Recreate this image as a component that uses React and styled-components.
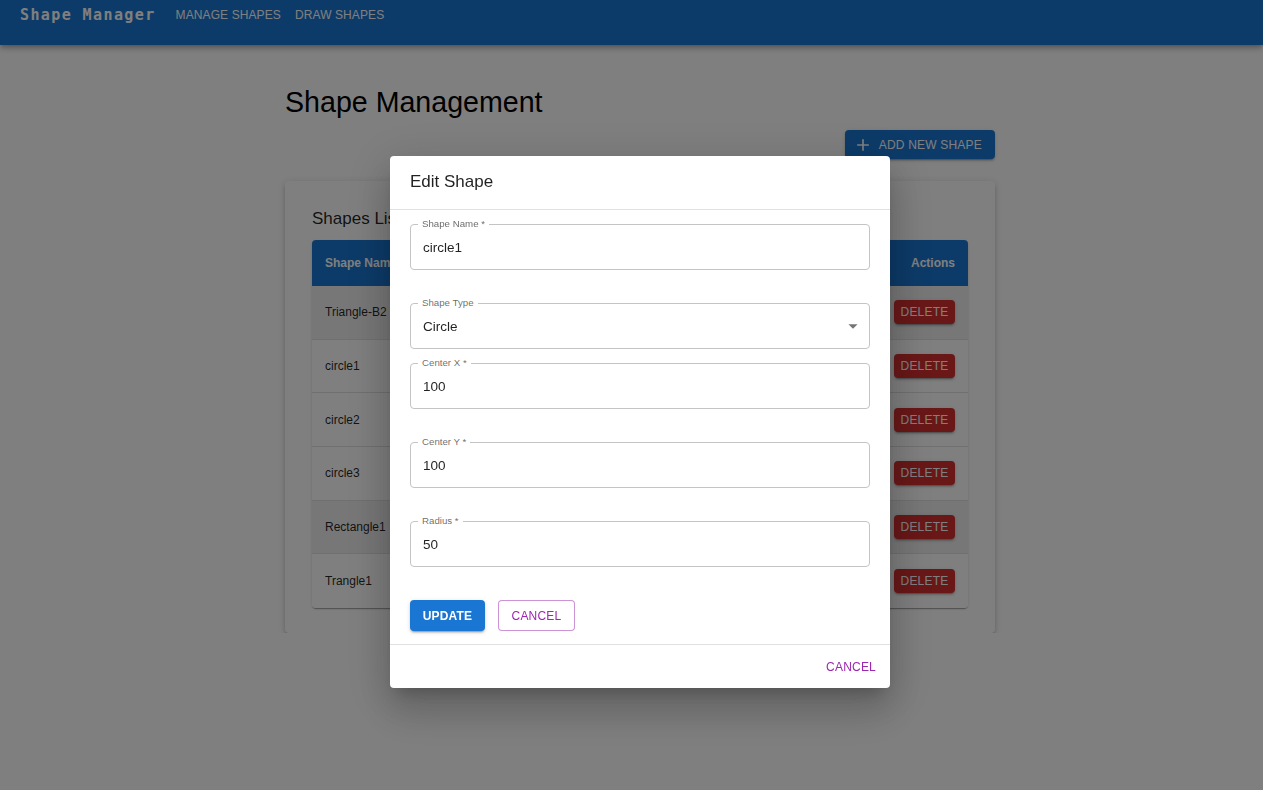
import React from "react";
import styled, { createGlobalStyle } from "styled-components";

const GlobalStyle = createGlobalStyle`
  html, body { margin: 0; padding: 0; background: #fff; }
  body {
    font-family: "Liberation Sans", Arial, sans-serif;
    color: rgba(0, 0, 0, 0.87);
  }
  * { box-sizing: border-box; }
`;

const AppBar = styled.header`
  height: 45px;
  background: #1976d2;
  color: #fff;
  display: flex;
  align-items: flex-start;
  gap: 20px;
  padding: 5px 20px 0;
  box-shadow: 0 2px 4px -1px rgba(0, 0, 0, 0.2), 0 4px 5px 0 rgba(0, 0, 0, 0.14),
    0 1px 10px 0 rgba(0, 0, 0, 0.12);
`;

const Brand = styled.div`
  font-family: "DejaVu Sans Mono", "Liberation Mono", monospace;
  font-weight: 700;
  font-size: 15px;
  letter-spacing: 1.4px;
  line-height: 21px;
`;

const Nav = styled.nav`
  display: flex;
  gap: 14px;
`;

const NavLink = styled.span`
  font-size: 12px;
  line-height: 21px;
  letter-spacing: 0.1px;
  text-transform: uppercase;
`;

const Main = styled.main`
  padding-left: 17px;
`;

const Container = styled.div`
  width: 710px;
  margin: 0 auto;
  padding-top: 40px;
`;

const Heading = styled.h1`
  margin: 0;
  font-size: 28.6px;
  font-weight: 400;
  line-height: 35px;
  color: #000;
`;

const Toolbar = styled.div`
  display: flex;
  justify-content: flex-end;
  margin-top: 10px;
`;

const ContainedButton = styled.button`
  display: inline-flex;
  align-items: center;
  justify-content: center;
  gap: 6px;
  height: ${(p) => p.$h || 29}px;
  min-width: ${(p) => p.$w || 0}px;
  padding: ${(p) => p.$pad || "0 14px"};
  border: none;
  border-radius: 4px;
  background: ${(p) => p.$bg || "#1976d2"};
  color: #fff;
  font-family: inherit;
  font-size: 12px;
  font-weight: ${(p) => p.$weight || 400};
  letter-spacing: 0.2px;
  text-transform: uppercase;
  box-shadow: 0 3px 1px -2px rgba(0, 0, 0, 0.2), 0 2px 2px 0 rgba(0, 0, 0, 0.14),
    0 1px 5px 0 rgba(0, 0, 0, 0.12);
`;

const Paper = styled.section`
  margin-top: 22px;
  padding: 27px 27px 25px;
  border-radius: 4px;
  background: #fff;
  box-shadow: 0 3px 3px -2px rgba(0, 0, 0, 0.2), 0 3px 4px 0 rgba(0, 0, 0, 0.14),
    0 1px 8px 0 rgba(0, 0, 0, 0.12);
`;

const PaperTitle = styled.h2`
  margin: 0 0 10px;
  font-size: 17px;
  font-weight: 400;
  line-height: 22px;
`;

const Table = styled.div`
  border-radius: 4px;
  overflow: hidden;
  box-shadow: 0 2px 1px -1px rgba(0, 0, 0, 0.2), 0 1px 1px 0 rgba(0, 0, 0, 0.14),
    0 1px 3px 0 rgba(0, 0, 0, 0.12);
`;

const Row = styled.div`
  display: grid;
  grid-template-columns: 1.1fr 1fr 1.3fr 100px;
  align-items: center;
  height: ${(p) => (p.$head ? "46px" : "53.67px")};
  background: ${(p) => (p.$head ? "#1976d2" : p.$shaded ? "#efefef" : "#fff")};
  color: ${(p) => (p.$head ? "#fff" : "rgba(0,0,0,0.87)")};
  font-weight: ${(p) => (p.$head ? 700 : 400)};
  font-size: 12px;
  border-bottom: ${(p) => (p.$last || p.$head ? "none" : "1px solid #e0e0e0")};
`;

const Cell = styled.div`
  padding: 0 13px;
  text-align: ${(p) => (p.$right ? "right" : "left")};
  white-space: nowrap;
`;

const DeleteButton = styled(ContainedButton)`
  height: 24px;
  width: 61px;
  padding: 0;
`;

const Backdrop = styled.div`
  position: fixed;
  inset: 0;
  background: rgba(0, 0, 0, 0.5);
  display: flex;
  justify-content: center;
  align-items: flex-start;
  padding: 156px 0 0 17px;
`;

const Dialog = styled.div`
  width: 500px;
  background: #fff;
  border-radius: 4px;
  box-shadow: 0 11px 15px -7px rgba(0, 0, 0, 0.2), 0 24px 38px 3px rgba(0, 0, 0, 0.14),
    0 9px 46px 8px rgba(0, 0, 0, 0.12);
`;

const DialogTitle = styled.div`
  height: 54px;
  padding: 0 20px;
  line-height: 51px;
  font-size: 17px;
  border-bottom: 1px solid #e0e0e0;
`;

const DialogContent = styled.div`
  display: flex;
  flex-direction: column;
  gap: 14px;
  padding: 14px 20px 13px;
  border-bottom: 1px solid #e0e0e0;
`;

const Field = styled.div`
  position: relative;
  height: 46px;
  display: flex;
  align-items: center;
  justify-content: space-between;
  padding: 0 5px 0 12px;
  margin-bottom: ${(p) => (p.$spaced ? 19 : 0)}px;
  border: 1px solid #c4c4c4;
  border-radius: 4px;
  font-size: 13.5px;
`;

const FieldLabel = styled.span`
  position: absolute;
  top: -7px;
  left: 7px;
  padding: 0 4px;
  background: #fff;
  font-size: 9.7px;
  line-height: 11px;
  color: rgba(0, 0, 0, 0.6);
`;

const ButtonRow = styled.div`
  display: flex;
  gap: 13px;
`;

const OutlinedButton = styled.button`
  height: 31px;
  width: 77px;
  border: 1px solid rgba(156, 39, 176, 0.5);
  border-radius: 4px;
  background: #fff;
  color: #9c27b0;
  font-family: inherit;
  font-size: 12px;
  letter-spacing: 0.2px;
`;

const DialogFooter = styled.div`
  height: 43px;
  display: flex;
  justify-content: flex-end;
  align-items: center;
  padding-right: 6px;
`;

const TextButton = styled.button`
  height: 30px;
  padding: 0 8px;
  border: none;
  background: none;
  color: #9c27b0;
  font-family: inherit;
  font-size: 12px;
  letter-spacing: 0.2px;
`;

const AddIcon = () => (
  <svg width="20" height="20" viewBox="0 0 24 24" fill="currentColor">
    <path d="M19 13h-6v6h-2v-6H5v-2h6V5h2v6h6v2z" />
  </svg>
);

const DropIcon = () => (
  <svg width="22" height="22" viewBox="0 0 24 24" fill="#757575">
    <path d="M7 10l5 5 5-5z" />
  </svg>
);

const shapes = [
  { name: "Triangle-B2", type: "Triangle", info: "(0,0) (50,100) (100,0)", shaded: true },
  { name: "circle1", type: "Circle", info: "Center (100,100) r 50" },
  { name: "circle2", type: "Circle", info: "Center (200,150) r 40" },
  { name: "circle3", type: "Circle", info: "Center (300,200) r 30" },
  { name: "Rectangle1", type: "Rectangle", info: "(10,10) 120 x 80", shaded: true },
  { name: "Trangle1", type: "Triangle", info: "(0,0) (60,90) (120,0)" },
];

const fields = [
  { label: "Shape Name *", value: "circle1", spaced: true },
  { label: "Shape Type", value: "Circle", select: true },
  { label: "Center X *", value: "100", spaced: true },
  { label: "Center Y *", value: "100", spaced: true },
  { label: "Radius *", value: "50", spaced: true },
];

const App = () => {
  return (
    <>
      <GlobalStyle />
      <AppBar>
        <Brand>Shape Manager</Brand>
        <Nav>
          <NavLink>Manage Shapes</NavLink>
          <NavLink>Draw Shapes</NavLink>
        </Nav>
      </AppBar>
      <Main>
        <Container>
          <Heading>Shape Management</Heading>
          <Toolbar>
            <ContainedButton $pad="0 13px 0 8px" $w={149}>
              <AddIcon />
              Add New Shape
            </ContainedButton>
          </Toolbar>
          <Paper>
            <PaperTitle>Shapes List</PaperTitle>
            <Table>
              <Row $head>
                <Cell>Shape Name</Cell>
                <Cell>Shape Type</Cell>
                <Cell>Details</Cell>
                <Cell $right>Actions</Cell>
              </Row>
              {shapes.map((s, i) => (
                <Row key={s.name} $shaded={s.shaded} $last={i === shapes.length - 1}>
                  <Cell>{s.name}</Cell>
                  <Cell>{s.type}</Cell>
                  <Cell>{s.info}</Cell>
                  <Cell $right>
                    <DeleteButton $bg="#d32f2f">Delete</DeleteButton>
                  </Cell>
                </Row>
              ))}
            </Table>
          </Paper>
        </Container>
      </Main>

      <Backdrop>
        <Dialog>
          <DialogTitle>Edit Shape</DialogTitle>
          <DialogContent>
            {fields.map((f) => (
              <Field key={f.label} $spaced={f.spaced}>
                <FieldLabel>{f.label}</FieldLabel>
                <span>{f.value}</span>
                {f.select && <DropIcon />}
              </Field>
            ))}
            <ButtonRow>
              <ContainedButton $h={31} $pad="0" $w={75} $weight={700}>
                Update
              </ContainedButton>
              <OutlinedButton>CANCEL</OutlinedButton>
            </ButtonRow>
          </DialogContent>
          <DialogFooter>
            <TextButton>CANCEL</TextButton>
          </DialogFooter>
        </Dialog>
      </Backdrop>
    </>
  );
};

export default App;
